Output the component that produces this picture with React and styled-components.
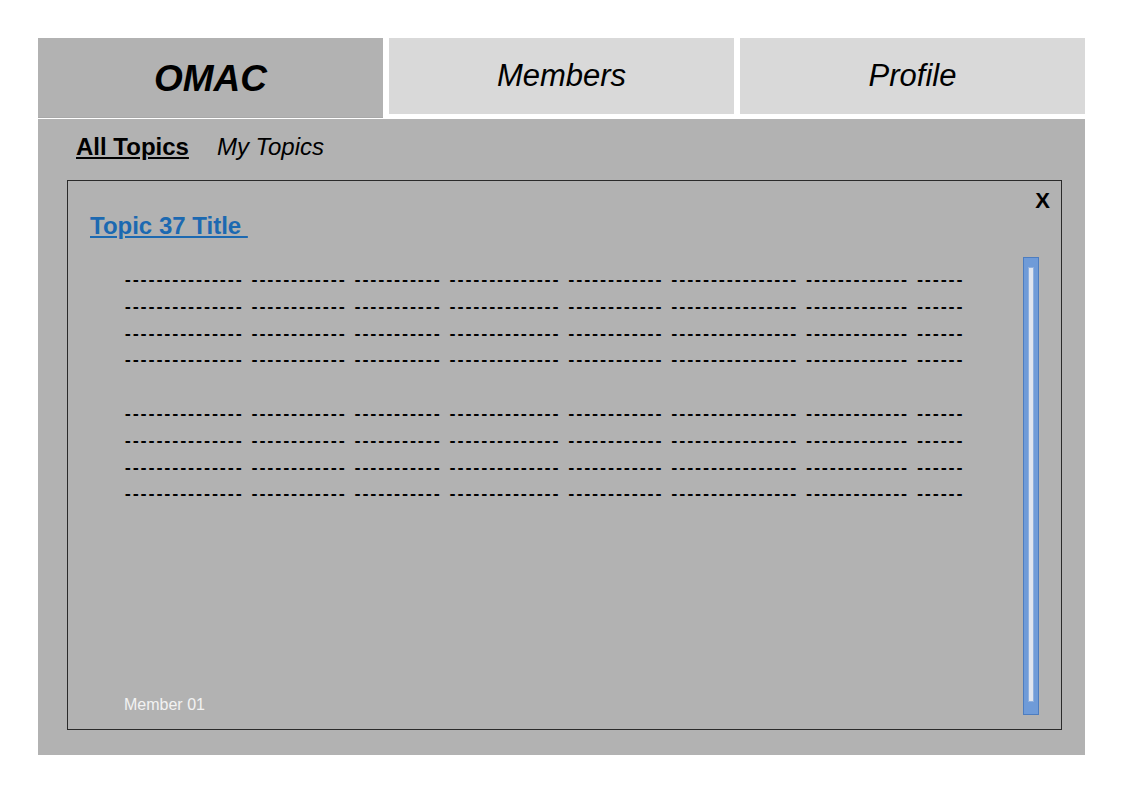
import React from "react";
import styled, { createGlobalStyle } from "styled-components";

const GlobalStyle = createGlobalStyle`
  html, body {
    margin: 0;
    padding: 0;
    background: #ffffff;
    font-family: "Liberation Sans", Arial, sans-serif;
  }
`;

const Page = styled.div`
  padding: 38px 0 0 38px;
  width: 1047px;
`;

const Tabs = styled.nav`
  display: grid;
  grid-template-columns: 1fr 1fr 1fr;
  column-gap: 6px;
  align-items: start;
  height: 81px;
`;

const Tab = styled.div`
  display: flex;
  align-items: center;
  justify-content: center;
  height: ${(p) => (p.active ? "80px" : "76px")};
  background: ${(p) => (p.active ? "#b2b2b2" : "#d9d9d9")};
  border-bottom: ${(p) => (p.active ? "1px solid #a9a9a9" : "none")};
  color: #000;
  font-style: italic;
  font-weight: ${(p) => (p.active ? 700 : 400)};
  font-size: ${(p) => (p.active ? "37px" : "31px")};
  padding-top: ${(p) => (p.active ? "2px" : "0")};
  box-sizing: border-box;
  cursor: pointer;
`;

const Panel = styled.main`
  display: flex;
  flex-direction: column;
  height: 636px;
  background: #b2b2b2;
  padding: 13.5px 0 0 0;
  box-sizing: border-box;
`;

const SubTabs = styled.div`
  display: flex;
  gap: 28px;
  padding-left: 38px;
  height: 27px;
`;

const SubTab = styled.span`
  font-size: 24px;
  line-height: 27px;
  color: #000;
  font-weight: ${(p) => (p.active ? 700 : 400)};
  font-style: ${(p) => (p.active ? "normal" : "italic")};
  text-decoration: ${(p) => (p.active ? "underline" : "none")};
  text-underline-offset: 2px;
  cursor: pointer;
`;

const Card = styled.section`
  flex: 1;
  display: grid;
  grid-template-columns: 1fr auto;
  margin: 20.5px 23px 25px 29px;
  border: 1px solid #2a2a2a;
  min-height: 0;
`;

const Content = styled.div`
  display: flex;
  flex-direction: column;
  padding: 31px 0 14.3px 22px;
  min-width: 0;
`;

const TopicTitle = styled.a`
  align-self: flex-start;
  font-size: 24px;
  line-height: 27px;
  font-weight: 700;
  color: #1c69b1;
  text-decoration: underline;
  text-underline-offset: 2px;
  white-space: pre;
  cursor: pointer;
`;

const Body = styled.div`
  margin: 29px 0 0 33px;
  display: flex;
  flex-direction: column;
  gap: 26.8px;
`;

const Para = styled.div`
  font-family: "Liberation Mono", "Courier New", monospace;
  font-weight: 700;
  font-size: 16px;
  letter-spacing: -1.68px;
  line-height: 26.8px;
  color: #000;
  white-space: pre;
`;

const Author = styled.div`
  margin: auto 0 0 34px;
  font-size: 16px;
  line-height: 18.4px;
  color: #f2f2f2;
`;

const Side = styled.div`
  display: flex;
  flex-direction: column;
  align-items: flex-end;
  padding: 9px 11px 14px 0;
`;

const Close = styled.button`
  border: none;
  background: none;
  padding: 0;
  font-family: "Liberation Sans", Arial, sans-serif;
  font-size: 22px;
  line-height: 22px;
  font-weight: 700;
  color: #000;
  cursor: pointer;
`;

const ScrollTrack = styled.div`
  flex: 1;
  display: flex;
  width: 16px;
  margin: 45px 11px 0 0;
  padding: 9px 4px 12px 4px;
  box-sizing: border-box;
  background: #6f9bd8;
  border: 1px solid #4d7dc0;
`;

const ScrollThumb = styled.div`
  flex: 1;
  background: #dfe5ef;
  border: 1px solid #8fb0de;
`;

const groups = [15, 12, 11, 14, 12, 16, 13, 6];
const line = groups.map((n) => "-".repeat(n)).join(" ");
const para = [line, line, line, line].join("\n");

export default function App() {
  return (
    <>
      <GlobalStyle />
      <Page>
        <Tabs>
          <Tab active>OMAC</Tab>
          <Tab>Members</Tab>
          <Tab>Profile</Tab>
        </Tabs>
        <Panel>
          <SubTabs>
            <SubTab active>All Topics</SubTab>
            <SubTab>My Topics</SubTab>
          </SubTabs>
          <Card>
            <Content>
              <TopicTitle>{"Topic 37 Title "}</TopicTitle>
              <Body>
                <Para>{para}</Para>
                <Para>{para}</Para>
              </Body>
              <Author>Member 01</Author>
            </Content>
            <Side>
              <Close>X</Close>
              <ScrollTrack>
                <ScrollThumb />
              </ScrollTrack>
            </Side>
          </Card>
        </Panel>
      </Page>
    </>
  );
}
